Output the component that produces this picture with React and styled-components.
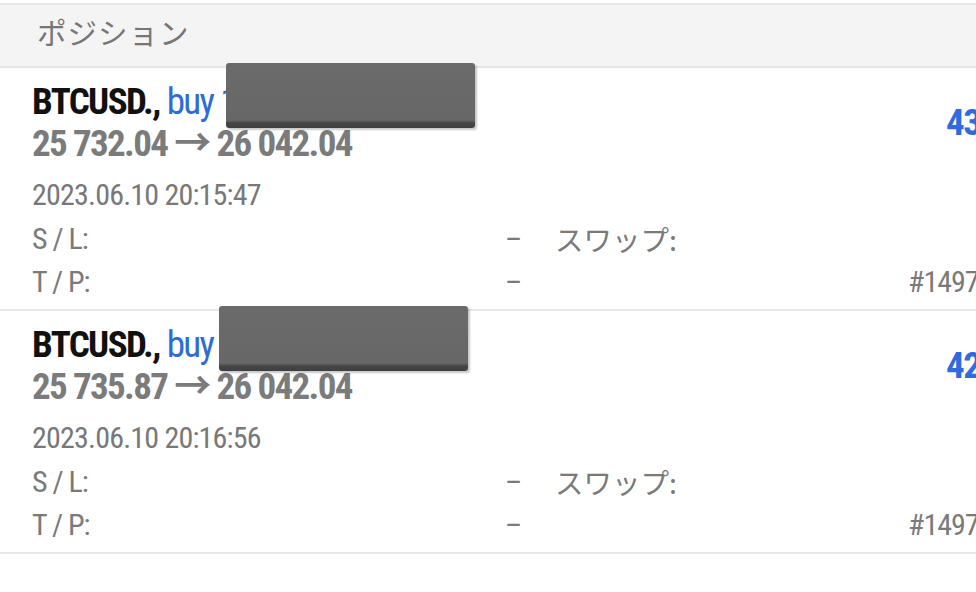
import React from "react";
import styled, { createGlobalStyle } from "styled-components";

const Global = createGlobalStyle`
  html, body { margin: 0; padding: 0; background: #fff; overflow: hidden; }
  body { width: 976px; height: 592px; }
`;

const FONT = `Roboto, "Noto Sans CJK JP", sans-serif`;

const Page = styled.div`
  width: 976px;
  height: 592px;
  overflow: hidden;
  background: #fff;
  padding-top: 3px;
  box-sizing: border-box;
  font-family: ${FONT};
  font-stretch: condensed;
`;

const Header = styled.div`
  background: #f4f4f4;
  border-top: 2px solid #e6e6e6;
  border-bottom: 2px solid #e6e6e6;
  display: flex;
  align-items: center;
  padding-left: 37px;
  padding-bottom: 10px;
  box-sizing: border-box;
  height: 65px;
  font-family: "Noto Sans CJK JP", sans-serif;
  font-stretch: normal;
  font-size: 29.5px;
  color: #767676;
  letter-spacing: 1px;
`;

const Item = styled.div`
  position: relative;
  width: 1040px;
  box-sizing: border-box;
  padding: 14px 0 0 32px;
  height: 243px;
  border-bottom: 2px solid #e8e8e8;
`;

const Top = styled.div`
  display: flex;
  justify-content: space-between;
  align-items: flex-start;
`;

const Title = styled.div`
  font-size: 37px;
  line-height: 40px;
  font-weight: 700;
  color: #111;
  letter-spacing: -1.6px;
`;

const Side = styled.span`
  font-weight: 400;
  color: #2f6bd6;
`;

const Prices = styled.div`
  margin-top: 3px;
  font-size: 37px;
  line-height: 38px;
  font-weight: 700;
  color: #7b7b7b;
  letter-spacing: -1.65px;
`;

const Profit = styled.div`
  font-size: 37px;
  font-weight: 700;
  color: #2e6ae0;
  padding-top: 19px;
  width: 94px;
  letter-spacing: -1.5px;
`;

const DateLine = styled.div`
  margin-top: 10px;
  font-size: 30px;
  line-height: 44px;
  color: #787878;
  letter-spacing: -0.8px;
`;

const Grid = styled.div`
  display: grid;
  grid-template-columns: 473px 50px 1fr auto;
  font-size: 30px;
  line-height: 43px;
  color: #7a7a7a;
  letter-spacing: -1px;
`;

const Jp = styled.span`
  font-family: "Noto Sans CJK JP", sans-serif;
  font-stretch: normal;
  font-size: 28.5px;
  letter-spacing: 0;
`;

const Ticket = styled.span`
  width: 132px;
`;

const Redact = styled.div`
  position: absolute;
  left: ${(p) => p.$x}px;
  top: ${(p) => p.$y}px;
  width: 249px;
  height: 65px;
  border-radius: 3px;
  background: linear-gradient(#6b6b6b, #676767 88%, #474747 92%, #3f3f3f);
  box-shadow: 2px 2px 2px rgba(0, 0, 0, 0.22);
`;

const data = [
  { open: "25 732.04", cur: "26 042.04", date: "2023.06.10 20:15:47", profit: "43.40", rx: 226, ry: -5 },
  { open: "25 735.87", cur: "26 042.04", date: "2023.06.10 20:16:56", profit: "42.62", rx: 219, ry: -5 },
];

function Position({ d }) {
  return (
    <Item>
      <Top>
        <div>
          <Title>
            BTCUSD., <Side>buy 1.00</Side>
          </Title>
          <Prices>
            {d.open} → {d.cur}
          </Prices>
        </div>
        <Profit>{d.profit}</Profit>
      </Top>
      <DateLine>{d.date}</DateLine>
      <Grid>
        <span>S / L:</span>
        <span>–</span>
        <Jp>スワップ:</Jp>
        <span></span>
        <span>T / P:</span>
        <span>–</span>
        <span></span>
        <Ticket>#14970001</Ticket>
      </Grid>
      <Redact $x={d.rx} $y={d.ry} />
    </Item>
  );
}

export default function App() {
  return (
    <>
      <Global />
      <Page>
        <Header>ポジション</Header>
        {data.map((d, i) => (
          <Position key={i} d={d} />
        ))}
      </Page>
    </>
  );
}
